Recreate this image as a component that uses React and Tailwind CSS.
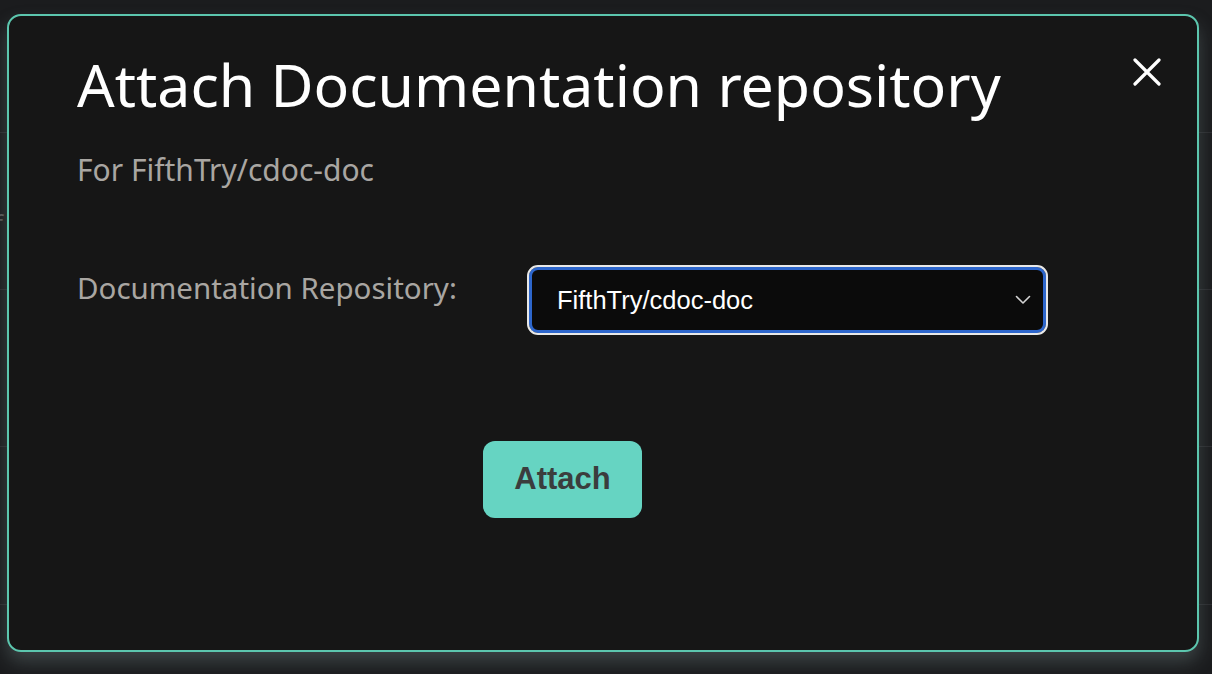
import React from "react";

function CloseIcon() {
  return (
    <svg width="28" height="28" viewBox="0 0 28 28" fill="none">
      <path d="M2 2L26 26M26 2L2 26" stroke="white" strokeWidth="3.2" strokeLinecap="round" />
    </svg>
  );
}

function Chevron() {
  return (
    <svg width="16" height="10" viewBox="0 0 16 10" fill="none">
      <path d="M1.5 1.5L8 8L14.5 1.5" stroke="#d4d4d4" strokeWidth="1.6" strokeLinecap="round" strokeLinejoin="round" />
    </svg>
  );
}

export default function App() {
  const sans = { fontFamily: '"Noto Sans", Inter, sans-serif' };
  const arial = { fontFamily: '"Liberation Sans", Arial, sans-serif' };
  return (
    <div className="relative h-[674px] w-full overflow-hidden bg-[#1b1c1e]">
      {/* page content behind the modal */}
      <div className="absolute inset-0 flex flex-col pt-[132px]">
        <div className="h-[157px] border-t border-[#2a2b2e]" />
        <div className="h-[157px] border-t border-[#2a2b2e]" />
        <div className="h-[158px] border-t border-[#2a2b2e]" />
        <div className="border-t border-[#2a2b2e]" />
      </div>
      <div className="absolute left-[-6px] top-[204px] text-[26px] text-[#555]" style={sans}>f</div>

      <div className="relative pt-[14px] pl-[7px]">
        <div className="relative h-[638px] w-[1192px] rounded-[14px] border-2 border-[#5cc6ae] bg-[#161616] pl-[68px] pt-[28px] shadow-[0_10px_18px_rgba(120,140,140,0.35)]">
          <button className="absolute right-[36px] top-[42px]">
            <CloseIcon />
          </button>

          <h1 className="text-[59px] leading-[80px] text-white" style={sans}>
            Attach Documentation repository
          </h1>

          <p className="mt-[28px] text-[30px] leading-[36px] text-[#a9a6a2]" style={sans}>
            For FifthTry/cdoc-doc
          </p>

          <div className="mt-[77px] flex items-start">
            <label className="w-[450px] pt-[5px] text-[29.5px] leading-[36px] text-[#a9a6a2]" style={sans}>
              Documentation Repository:
            </label>
            <div className="flex h-[70px] w-[521px] items-center justify-between rounded-[11px] border-2 border-[#e8e8e8] bg-[#0b0b0b] pl-[28px] pr-[15px] shadow-[inset_0_0_0_3px_#2d66cc]">
              <span className="text-[25.5px] text-white" style={arial}>
                FifthTry/cdoc-doc
              </span>
              <Chevron />
            </div>
          </div>

          <div className="mt-[106px] pl-[406px]">
            <button
              className="h-[77px] w-[159px] rounded-[12px] bg-[#66d4c2] text-[31px] font-bold text-[#3b3d3d]"
              style={arial}
            >
              Attach
            </button>
          </div>
        </div>
      </div>
    </div>
  );
}
